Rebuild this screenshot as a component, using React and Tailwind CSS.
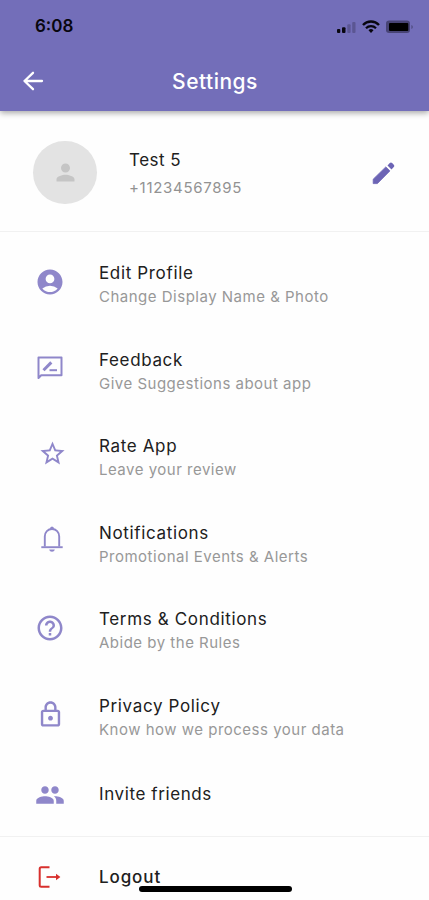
import {
  MdAccountCircle,
  MdHelpOutline,
  MdOutlineLock,
  MdPeople,
  MdPerson,
  MdStarOutline,
} from 'react-icons/md';

function FeedbackIcon() {
  return (
    <svg width="26" height="24" viewBox="0 0 26 24" fill="none" stroke="currentColor" strokeWidth="2">
      <path d="M1.5 22V1.5h23v17.8H4.2L1.5 22Z" strokeLinejoin="round" />
      <path d="M6.5 14.2l7.8-7.8" strokeWidth="3" />
      <path d="M12.5 14.2H20" />
    </svg>
  );
}

function BellIcon() {
  return (
    <svg className="mb-1 ml-1" width="24" height="28" viewBox="0 0 24 28" fill="none" stroke="currentColor" strokeWidth="1.9">
      <path d="M4.8 21.6V11.4C4.8 7 7.9 4 12 4s7.2 3 7.2 7.4v10.2" />
      <path d="M1.3 22.2h21.4" />
      <path d="M9.9 4.2a2.1 2.6 0 0 1 4.2 0Z" fill="currentColor" stroke="none" />
      <path d="M9.2 24.6h5.6c-.4 1.4-1.4 2.2-2.8 2.2s-2.4-.8-2.8-2.2Z" fill="currentColor" stroke="none" />
    </svg>
  );
}

function PencilIcon() {
  return (
    <svg className="mt-[20px] ml-[3px]" width="24" height="24" viewBox="0 0 24 24" fill="#6c64b5">
      <path d="M1.2 22.6v-4.4L13.8 5.9l4.1 4L5.4 22.6Z" stroke="#6c64b5" strokeWidth=".8" strokeLinejoin="round" />
      <path d="M15.5 4.4l2.3-2.3a1.6 1.6 0 0 1 2.3 0l1.7 1.7a1.6 1.6 0 0 1 0 2.3l-2.3 2.3Z" />
    </svg>
  );
}

function LogoutIcon() {
  return (
    <svg width="24" height="22" viewBox="0 0 24 22" fill="none" stroke="currentColor" strokeWidth="2">
      <path d="M11.5 1.2H3.2a1.5 1.5 0 0 0-1.5 1.5v16.6a1.5 1.5 0 0 0 1.5 1.5h8.3" />
      <path d="M8.5 11H20" strokeWidth="1.8" />
      <path d="M18 7.7l4.4 3.3-4.4 3.3Z" fill="currentColor" stroke="none" />
    </svg>
  );
}

function StatusIcons() {
  return (
    <svg width="78" height="14" viewBox="0 0 78 14" fill="#08060f">
      <rect x="0" y="9" width="3.3" height="4" rx="1" />
      <rect x="5" y="7.3" width="3.5" height="5.7" rx="1" />
      <rect x="10.3" y="4.2" width="3.3" height="8.8" rx="1" opacity=".22" />
      <rect x="15.2" y="2" width="3.3" height="11" rx="1" opacity=".22" />
      <path d="M26 5a11 11 0 0 1 16 0" fill="none" stroke="#08060f" strokeWidth="2.4" />
      <path d="M29 8.2a7 7 0 0 1 10 0" fill="none" stroke="#08060f" strokeWidth="2.2" />
      <path d="M31.5 10.3a3.6 3.6 0 0 1 5 0L34 13Z" />
      <rect x="49" y="0.5" width="24" height="12.5" rx="3.2" opacity=".4" />
      <rect x="52" y="3" width="19.3" height="8" rx="1" fill="#000" />
      <path d="M74.5 5c1.6.6 1.6 3.4 0 4Z" opacity=".4" />
    </svg>
  );
}

const items = [
  { icon: <MdAccountCircle size={30} />, title: 'Edit Profile', text: 'Change Display Name & Photo' },
  { icon: <FeedbackIcon />, title: 'Feedback', text: 'Give Suggestions about app' },
  { icon: <MdStarOutline size={29} className="mb-0.5 ml-1" />, title: 'Rate App', text: 'Leave your review' },
  { icon: <BellIcon />, title: 'Notifications', text: 'Promotional Events & Alerts' },
  { icon: <MdHelpOutline size={30} />, title: 'Terms & Conditions', text: 'Abide by the Rules' },
  { icon: <MdOutlineLock size={29} />, title: 'Privacy Policy', text: 'Know how we process your data' },
];

function SettingsRow({ icon, title, text }) {
  return (
    <div className="flex h-[86.5px]">
      <div className="ml-[30px] flex h-[83px] w-10 items-center justify-center text-[#8f87ca]">{icon}</div>
      <div className="ml-[29px] pt-[21px]">
        <div className="text-[17px] leading-6 tracking-[0.65px] text-[#202020]">{title}</div>
        <div className="text-[15px] leading-6 tracking-[0.5px] text-[#989898]">{text}</div>
      </div>
    </div>
  );
}

export default function App() {
  return (
    <div className="relative h-[900px] w-[429px] overflow-hidden bg-[#fefefe] font-['Inter',sans-serif] whitespace-nowrap">
      <header className="h-[111px] bg-[#736eb9] shadow-[0_2px_6px_rgba(0,0,0,0.35)]">
        <div className="flex h-[53px] items-center justify-between pr-[14px] pl-[35px]">
          <span className="text-[17px] font-semibold text-[#08060f]">6:08</span>
          <StatusIcons />
        </div>
        <div className="grid h-14 grid-cols-[66px_1fr_66px] items-center">
          <svg className="ml-[22px]" width="22" height="20" viewBox="0 0 22 20" fill="none" stroke="white" strokeWidth="2.3" strokeLinecap="round" strokeLinejoin="round">
            <path d="M20 10H2.5M11 1.8L2.5 10l8.5 8.2" />
          </svg>
          <h1 className="pt-0.5 pl-px text-center text-[21px] font-medium tracking-[0.5px] text-white">Settings</h1>
        </div>
      </header>

      <section className="flex h-[121px] border-b border-[#f1f1f1] pt-[30px] pl-[33px]">
        <div className="flex h-[63px] w-16 items-center justify-center rounded-full bg-[#e3e3e3]">
          <MdPerson size={27} className="text-[#c5c5c5]" />
        </div>
        <div className="ml-8 w-[240px] pt-[6px]">
          <div className="text-[17px] leading-[27px] tracking-[0.5px] text-[#202020]">Test 5</div>
          <div className="text-[15px] leading-[27px] tracking-[0.7px] text-[#929292]">+11234567895</div>
        </div>
        <PencilIcon />
      </section>

      <main className="h-[605px] border-b border-[#f1f1f1] pt-2">
        {items.map((item) => (
          <SettingsRow key={item.title} {...item} />
        ))}
        <div className="flex h-[72px] items-center">
          <div className="ml-[30px] flex w-10 justify-center text-[#8f87ca]">
            <MdPeople size={30} />
          </div>
          <div className="ml-[29px] text-[17px] tracking-[0.6px] text-[#202020]">Invite friends</div>
        </div>
      </main>

      <div className="flex h-20 items-center">
        <div className="ml-[30px] flex w-10 justify-center text-[#d8302d]">
          <LogoutIcon />
        </div>
        <div className="ml-[29px] pt-0.5 text-[17px] font-medium tracking-[0.9px] text-[#202020]">Logout</div>
      </div>

      <div className="absolute top-[886px] left-[139px] h-[6px] w-[153px] rounded-full bg-black" />
    </div>
  );
}
